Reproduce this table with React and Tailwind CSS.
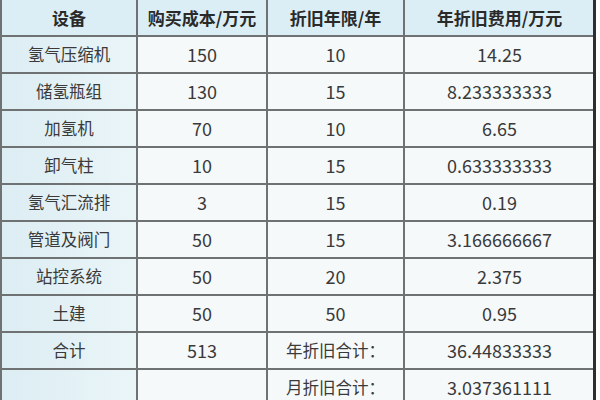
import React from 'react';

const rows = [
  ['氢气压缩机', '150', '10', '14.25'],
  ['储氢瓶组', '130', '15', '8.233333333'],
  ['加氢机', '70', '10', '6.65'],
  ['卸气柱', '10', '15', '0.633333333'],
  ['氢气汇流排', '3', '15', '0.19'],
  ['管道及阀门', '50', '15', '3.166666667'],
  ['站控系统', '50', '20', '2.375'],
  ['土建', '50', '50', '0.95'],
  ['合计', '513', '年折旧合计：', '36.44833333'],
  ['', '', '月折旧合计：', '3.037361111'],
];

const cell = 'border-2 border-[#6e7272] text-center align-middle';

// numbers in the picture are set larger than the Chinese text
const size = (v) => (/^[\d.]+$/.test(v) ? 'text-[18px]' : 'text-[16.5px]');

const App = () => {
  return (
    <div
      className="w-[600px] h-[400px] overflow-hidden bg-white"
      style={{ fontFamily: '"Noto Sans CJK SC", "Noto Sans", sans-serif' }}
    >
      <div className="w-[596px] border-r-[3px] border-[#2e2e2e] h-[400px] overflow-hidden">
        <table className="border-collapse table-fixed w-[594px] -mt-[2px]">
          <colgroup>
            <col className="w-[136px]" />
            <col className="w-[130px]" />
            <col className="w-[137px]" />
            <col className="w-[191px]" />
          </colgroup>
          <thead>
            <tr className="h-[37px] bg-[#dbeef5]">
              {['设备', '购买成本/万元', '折旧年限/年', '年折旧费用/万元'].map((h) => (
                <th key={h} className={`${cell} text-[17px] font-bold text-[#2a2a2a]`}>
                  {h}
                </th>
              ))}
            </tr>
          </thead>
          <tbody>
            {rows.map((r, i) => (
              <tr key={i} className="h-[37px]">
                <td className={`${cell} bg-gradient-to-r from-[#dcedf3] to-[#eaf5f8] text-[#3a3a3a] ${size(r[0])}`}>
                  {r[0]}
                </td>
                <td className={`${cell} bg-[#f6f9fa] text-[#3a3a3a] ${size(r[1])}`}>{r[1]}</td>
                <td className={`${cell} bg-[#f6f9fa] text-[#3a3a3a] ${size(r[2])}`}>{r[2]}</td>
                <td className={`${cell} bg-[#f6f9fa] text-[#3a3a3a] ${size(r[3])}`}>{r[3]}</td>
              </tr>
            ))}
          </tbody>
        </table>
      </div>
    </div>
  );
};

export default App;
